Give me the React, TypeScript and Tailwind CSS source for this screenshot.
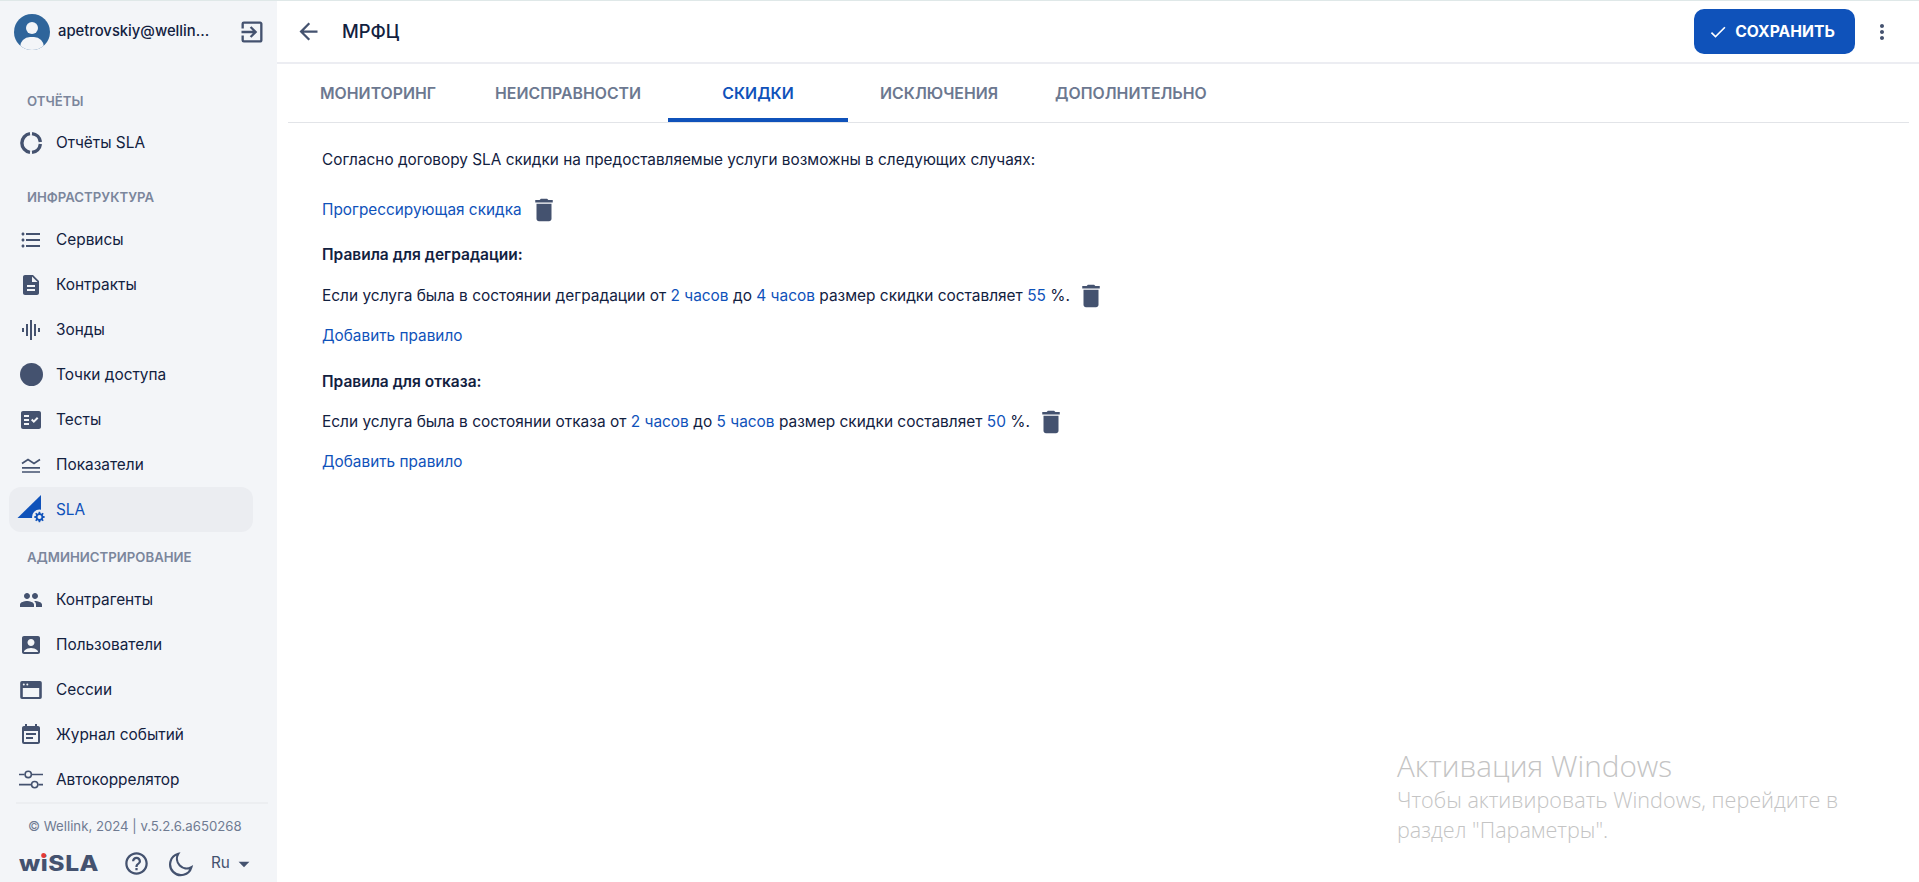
import type { ReactNode } from "react";
import {
	MdAccountBox,
	MdArrowBack,
	MdArrowDropDown,
	MdCheck,
	MdDelete,
	MdDescription,
	MdEventNote,
	MdFactCheck,
	MdFormatListBulleted,
	MdGraphicEq,
	MdHelpOutline,
	MdMoreVert,
	MdOutlineExitToApp,
	MdPeople,
} from "react-icons/md";

const ReportsIcon = () => (
	<svg viewBox="0 0 24 24" className="size-6" fill="none" stroke="#44526f" strokeWidth="3.4">
		<path d="M13 2.6a9.5 9.5 0 0 1 8.4 8.4" />
		<path d="M21.4 13a9.5 9.5 0 0 1-8.4 8.4" />
		<path d="M11 21.4A9.5 9.5 0 0 1 11 2.6" />
	</svg>
);

const MetricsIcon = () => (
	<svg viewBox="0 0 24 24" className="size-6" fill="none" stroke="#44526f" strokeWidth="1.7">
		<path d="M3 10.5 9 6.5l6 4 6-4" />
		<path d="M3 14.8h18M3 19h18" />
	</svg>
);

const SessionsIcon = () => (
	<svg viewBox="0 0 24 24" className="size-6">
		<path
			d="M3 3h18a1.8 1.8 0 0 1 1.8 1.8v14.4A1.8 1.8 0 0 1 21 21H3a1.8 1.8 0 0 1-1.8-1.8V4.8A1.8 1.8 0 0 1 3 3zm.8 7v9h16.4v-9z"
			fill="#44526f"
			fillRule="evenodd"
		/>
		<circle cx="4.8" cy="6.5" r="1" fill="#f3f5f8" />
		<circle cx="8.3" cy="6.5" r="1" fill="#f3f5f8" />
	</svg>
);

const SlidersIcon = () => (
	<svg viewBox="0 0 26 24" className="h-6 w-[26px]" fill="none" stroke="#44526f" strokeWidth="1.7">
		<path d="M0 6h6M14 6h12M0 17h13M21 17h5" />
		<circle cx="10" cy="6" r="3.4" />
		<circle cx="17" cy="17" r="3.4" />
	</svg>
);

const SlaIcon = () => (
	<svg viewBox="0 0 28 28" className="size-7 shrink-0 -translate-y-[1px]">
		<path d="M0.5 23 24 0v23z" fill="#0f52ba" />
		<circle cx="22.5" cy="22" r="7.5" fill="#ebedf1" />
		<g transform="translate(1.7 0.5)">
			<path
				d="M26 22.2v-1.4l-1.5-.3-.4-1 .9-1.2-1-1-1.2.9-1-.4-.3-1.5H20l-.3 1.5-1 .4-1.2-.9-1 1 .9 1.2-.4 1-1.5.3v1.4l1.5.3.4 1-.9 1.2 1 1 1.2-.9 1 .4.3 1.5h1.5l.3-1.5 1-.4 1.2.9 1-1-.9-1.2.4-1zM20.8 23.5a2 2 0 1 1 0-4 2 2 0 0 1 0 4z"
				fill="#0f52ba"
			/>
		</g>
	</svg>
);

const MoonIcon = () => (
	<svg viewBox="0 0 24 24" className="size-[26px]" fill="none" stroke="#44526f" strokeWidth="2">
		<path d="M9.5 2.6A10 10 0 1 0 21.6 15 9 9 0 0 1 9.5 2.6z" />
	</svg>
);

const ic = "size-6 text-[#44526f]";

function NavItem({ icon, label, active }: { icon: ReactNode; label: string; active?: boolean }) {
	return (
		<div
			className={
				"mx-[9px] flex h-[45px] w-[244px] items-center gap-[13px] rounded-xl px-[10px] text-[15.4px] " +
				(active ? "bg-[#ebedf1] text-[#0f52ba]" : "text-[#12213f]")
			}
		>
			<span className="flex w-6 shrink-0 items-center justify-center">{icon}</span>
			<span>{label}</span>
		</div>
	);
}

function SectionLabel({ children, className }: { children: string; className: string }) {
	return (
		<div className={"flex h-5 items-center pl-[27px] text-[13.2px] font-semibold text-[#7b869c] " + className}>
			{children}
		</div>
	);
}

function Link({ children }: { children: ReactNode }) {
	return <span className="text-[#0f52ba]">{children}</span>;
}

function TrashButton({ className }: { className: string }) {
	return <MdDelete className={"size-[30px] text-[#44526f] " + className} />;
}

export default function App() {
	return (
		<div
			className="relative flex h-screen w-full overflow-hidden border-t border-[#dfe8e8] bg-white text-[#12213f]"
			style={{ fontFamily: "Inter, 'Liberation Sans', sans-serif" }}
		>
			<aside className="flex w-[277px] shrink-0 flex-col bg-[#f3f5f8]">
				<div className="flex h-[61px] shrink-0 items-center pl-[14px]">
					<div className="relative size-9 shrink-0 overflow-hidden rounded-full bg-[#2f659b]">
						<div className="absolute left-[12px] top-[8px] size-3 rounded-full bg-[#f3f5f8]" />
						<div className="absolute left-[6px] top-[23px] h-5 w-6 rounded-full bg-[#f3f5f8]" />
					</div>
					<span className="ml-2 w-[181px] whitespace-nowrap text-[14.8px] font-medium">apetrovskiy@wellin...</span>
					<MdOutlineExitToApp className="-ml-[1px] size-7 text-[#44526f]" />
				</div>

				<SectionLabel className="mt-[30px] mb-2">ОТЧЁТЫ</SectionLabel>
				<NavItem icon={<ReportsIcon />} label="Отчёты SLA" />

				<SectionLabel className="mt-[23px] mb-[9px]">ИНФРАСТРУКТУРА</SectionLabel>
				<NavItem icon={<MdFormatListBulleted className={ic} />} label="Сервисы" />
				<NavItem icon={<MdDescription className={ic} />} label="Контракты" />
				<NavItem icon={<MdGraphicEq className={ic} />} label="Зонды" />
				<NavItem icon={<div className="size-[23px] rounded-full bg-[#44526f]" />} label="Точки доступа" />
				<NavItem icon={<MdFactCheck className={ic} />} label="Тесты" />
				<NavItem icon={<MetricsIcon />} label="Показатели" />
				<NavItem icon={<SlaIcon />} label="SLA" active />

				<SectionLabel className="mt-[16px] mb-[9px]">АДМИНИСТРИРОВАНИЕ</SectionLabel>
				<NavItem icon={<MdPeople className="size-[26px] text-[#44526f]" />} label="Контрагенты" />
				<NavItem icon={<MdAccountBox className={ic} />} label="Пользователи" />
				<NavItem icon={<SessionsIcon />} label="Сессии" />
				<NavItem icon={<MdEventNote className={ic} />} label="Журнал событий" />
				<NavItem icon={<SlidersIcon />} label="Автокоррелятор" />

				<div className="mx-4 h-[2px] w-[252px] bg-[#eceef1]" />
				<div className="mt-3 pl-[28px] text-[13.2px] leading-[20px] text-[#6f7b92]">
					© Wellink, 2024 | v.5.2.6.a650268
				</div>
				<div className="mt-[14px] flex items-center pl-[19px]">
					<span className="relative w-[93px] origin-left scale-x-[1.17] text-[21px] font-extrabold leading-[26px] tracking-[0.5px] text-[#44526f]">
						wiSLA
						<span className="absolute left-[18.5px] top-[2px] h-[5px] w-[4px] rounded-full bg-[#e53935]" />
					</span>
					<MdHelpOutline className="ml-[11px] size-[27px] text-[#44526f]" />
					<span className="ml-[18px]">
						<MoonIcon />
					</span>
					<span className="ml-[17px] text-[15.3px] text-[#44526f]">Ru</span>
					<MdArrowDropDown className="ml-[1px] size-[26px] text-[#44526f]" />
				</div>
			</aside>

			<main className="min-w-0 flex-1">
				<header className="flex h-[63px] items-center border-b-2 border-[#ecedf2] pl-[18px] pr-[25px]">
					<MdArrowBack className="size-[27px] text-[#44526f]" />
					<h1 className="ml-[20px] text-[18.4px] font-medium">МРФЦ</h1>
					<button className="ml-auto flex h-[45px] w-[161px] items-center justify-center gap-[7px] rounded-[10px] bg-[#0f52ba] pr-[6px] text-[15.7px] font-bold text-white">
						<MdCheck className="size-5" />
						СОХРАНИТЬ
					</button>
					<MdMoreVert className="ml-[15px] size-6 text-[#44526f]" />
				</header>

				<div className="ml-[11px] mr-[10px] flex h-[59px] border-b border-[#e2e4e8] text-[15.85px] font-semibold text-[#6c7890]">
					<span className="ml-[32px] flex items-center pt-[2px]">МОНИТОРИНГ</span>
					<span className="ml-[59px] flex items-center pt-[2px]">НЕИСПРАВНОСТИ</span>
					<span className="ml-[27px] flex w-[180px] items-center justify-center border-b-4 border-[#0f52ba] pt-[6px] text-[#0f52ba]">
						СКИДКИ
					</span>
					<span className="ml-[32px] flex items-center pt-[2px]">ИСКЛЮЧЕНИЯ</span>
					<span className="ml-[57px] flex items-center pt-[2px]">ДОПОЛНИТЕЛЬНО</span>
				</div>

				<section className="pl-[45px] pt-[25px] text-[15.35px] leading-6">
					<div>Согласно договору SLA скидки на предоставляемые услуги возможны в следующих случаях:</div>
					<div className="mt-[26px] flex h-6 items-center">
						<Link>Прогрессирующая скидка</Link>
						<TrashButton className="ml-[7px]" />
					</div>
					<div className="mt-[21px] text-[15.5px] font-semibold">Правила для деградации:</div>
					<div className="mt-[17px] flex h-6 items-center text-[15.45px]">
						<span>
							Если услуга была в состоянии деградации от <Link>2 часов</Link> до <Link>4 часов</Link> размер скидки
							составляет <Link>55</Link> %.
						</span>
						<TrashButton className="ml-[6px]" />
					</div>
					<div className="mt-[16px]">
						<Link>Добавить правило</Link>
					</div>
					<div className="mt-[22px] text-[15.5px] font-semibold">Правила для отказа:</div>
					<div className="mt-[16px] flex h-6 items-center text-[15.45px]">
						<span>
							Если услуга была в состоянии отказа от <Link>2 часов</Link> до <Link>5 часов</Link> размер скидки
							составляет <Link>50</Link> %.
						</span>
						<TrashButton className="ml-[6px]" />
					</div>
					<div className="mt-[16px]">
						<Link>Добавить правило</Link>
					</div>
				</section>
			</main>

			<div
				className="pointer-events-none absolute left-[1397px] top-[746px] w-[480px] font-light text-[#c4c4c4]"
				style={{ fontFamily: "'Open Sans', sans-serif" }}
			>
				<div className="text-[29.7px] leading-[38px]">Активация Windows</div>
				<div className="text-[21.6px] leading-[30px]">
					Чтобы активировать Windows, перейдите в
					<br />
					раздел "Параметры".
				</div>
			</div>
		</div>
	);
}
